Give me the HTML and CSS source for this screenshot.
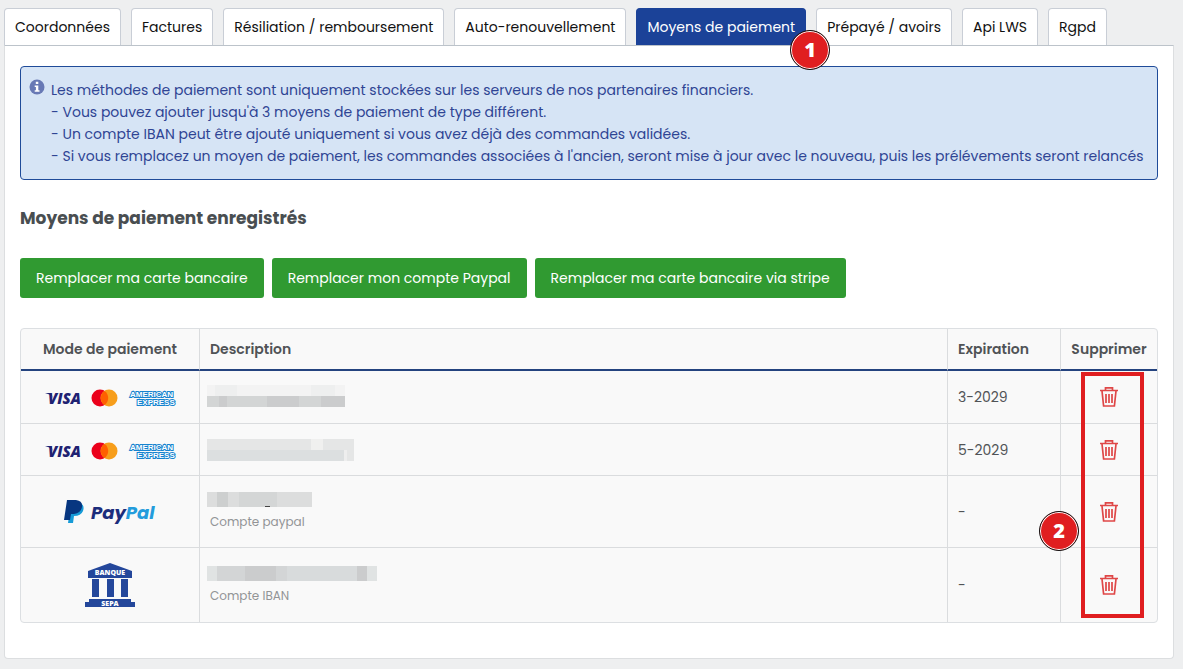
FILE: index.html
```html
<!DOCTYPE html>
<html lang="fr">
<head>
<meta charset="utf-8">
<title>Moyens de paiement</title>
<meta name="viewport" content="width=device-width, initial-scale=1">
<link rel="stylesheet" href="styles.css">
</head>
<body>
<svg class="sprite" aria-hidden="true">
  <symbol id="trash" viewBox="0 0 18 20">
    <path d="M0 3.500h18M5.500 3V.9h7V3M2 4l1.600 15h10.800L16 4M6 7v9M9 7v9M12 7v9" fill="none" stroke="#df4747" stroke-width="1.700"/>
  </symbol>
</svg>
<main class="page">
  <nav class="tabs" aria-label="Mon compte">
    <a class="tab" href="#">Coordonnées</a>
    <a class="tab" href="#">Factures</a>
    <a class="tab" href="#">Résiliation / remboursement</a>
    <a class="tab" href="#">Auto-renouvellement</a>
    <a class="tab tab-active" href="#" aria-current="page">Moyens de paiement<span class="marker marker-tab">1</span></a>
    <a class="tab" href="#">Prépayé / avoirs</a>
    <a class="tab" href="#">Api LWS</a>
    <a class="tab" href="#">Rgpd</a>
  </nav>
  <section class="panel">
    <div class="notice">
      <svg class="notice-icon" viewBox="0 0 16 16" aria-hidden="true"><circle cx="8" cy="8" r="7.500" fill="#6879b5"/><path d="M6.800 2.800h2.500v2.200H6.800zM5.700 6.500h3.600v4.700h1.200v1.600H5.700v-1.600h1.200V8H5.700z" fill="#fff"/></svg>
      <div>
        <p>Les méthodes de paiement sont uniquement stockées sur les serveurs de nos partenaires financiers.</p>
        <p>- Vous pouvez ajouter jusqu'à 3 moyens de paiement de type différent.</p>
        <p>- Un compte IBAN peut être ajouté uniquement si vous avez déjà des commandes validées.</p>
        <p>- Si vous remplacez un moyen de paiement, les commandes associées à l'ancien, seront mise à jour avec le nouveau, puis les prélévements seront relancés</p>
      </div>
    </div>
    <h1 class="title">Moyens de paiement enregistrés</h1>
    <div class="actions">
      <button class="btn" type="button">Remplacer ma carte bancaire</button>
      <button class="btn" type="button">Remplacer mon compte Paypal</button>
      <button class="btn" type="button">Remplacer ma carte bancaire via stripe</button>
    </div>
    <div class="table-wrap">
      <table class="methods">
        <colgroup><col class="col-mode"><col><col class="col-exp"><col class="col-del"></colgroup>
        <thead>
          <tr><th class="center" scope="col">Mode de paiement</th><th scope="col">Description</th><th scope="col">Expiration</th><th class="center" scope="col">Supprimer</th></tr>
        </thead>
        <tbody>
          <tr class="row-card">
            <td class="center"><svg class="cards" viewBox="-2 -4 134 24" role="img" aria-label="Visa, Mastercard, American Express">
              <text x="3" y="15" font-family="Open Sans, sans-serif" font-size="15" font-weight="800" font-style="italic" fill="#1f2272">VISA</text>
              <path d="M0 4h6l3 7-2-4Q4 5 0 4" fill="#1f2272"/>
              <circle cx="55" cy="9" r="8.500" fill="#eb001b"/><circle cx="64" cy="9" r="8.500" fill="#f79e1b"/>
              <path d="M59.500 2a8.500 8.500 0 0 1 0 14a8.500 8.500 0 0 1 0-14" fill="#ff5f00"/>
              <g font-family="Liberation Sans, sans-serif" font-size="8" font-weight="700" fill="#fff" stroke="#1683cf" stroke-width="2" paint-order="stroke"><text x="85" y="8">AMERICAN</text><text x="92" y="16">EXPRESS</text></g>
            </svg></td>
            <td><svg class="mask" width="150" height="26" aria-hidden="true"><path d="M0 0h138v11H0z" fill="#f3f3f3"/><path d="M8 0h22v11H8zM104 0h24v11h-24z" fill="#eeefef"/><path d="M0 11h138v11H0z" fill="#d3d5d5"/><path d="M12 11h8v11h-8zM60 11h32v11H60zM114 11h24v11h-24z" fill="#cbcccd"/></svg></td>
            <td>3-2029</td>
            <td class="center"><button class="delete" type="button" aria-label="Supprimer la carte 3-2029"><svg class="trash"><use href="#trash"/></svg></button></td>
          </tr>
          <tr class="row-card">
            <td class="center"><svg class="cards" viewBox="-2 -4 134 24" role="img" aria-label="Visa, Mastercard, American Express">
              <text x="3" y="15" font-family="Open Sans, sans-serif" font-size="15" font-weight="800" font-style="italic" fill="#1f2272">VISA</text>
              <path d="M0 4h6l3 7-2-4Q4 5 0 4" fill="#1f2272"/>
              <circle cx="55" cy="9" r="8.500" fill="#eb001b"/><circle cx="64" cy="9" r="8.500" fill="#f79e1b"/>
              <path d="M59.500 2a8.500 8.500 0 0 1 0 14a8.500 8.500 0 0 1 0-14" fill="#ff5f00"/>
              <g font-family="Liberation Sans, sans-serif" font-size="8" font-weight="700" fill="#fff" stroke="#1683cf" stroke-width="2" paint-order="stroke"><text x="85" y="8">AMERICAN</text><text x="92" y="16">EXPRESS</text></g>
            </svg></td>
            <td><svg class="mask" width="150" height="24" aria-hidden="true"><path d="M0 0h147v22H0z" fill="#e5e6e6"/><path d="M0 11h137v11H0z" fill="#dcdfe0"/><path d="M104 0h12v11h-12z" fill="#f0f0ef"/><path d="M137 11h3v11h-3z" fill="#eee"/></svg></td>
            <td>5-2029</td>
            <td class="center"><button class="delete" type="button" aria-label="Supprimer la carte 5-2029"><svg class="trash"><use href="#trash"/></svg></button></td>
          </tr>
          <tr class="row-paypal">
            <td class="center"><svg class="paypal" viewBox="0 0 92 26" role="img" aria-label="PayPal">
              <path d="M7 4h9q5 2 3 8-2 5-9 5l-1 7H4z" fill="#179bd7"/>
              <path d="M3 1h9q7 1 6 7-1 6-8 7H7l-1 6H0z" fill="#073680"/>
              <text y="20" font-family="Poppins, Lato, sans-serif" font-size="18" font-weight="700" font-style="italic"><tspan x="27" fill="#1c2d7c">Pay</tspan><tspan fill="#239cdc">Pal</tspan></text>
            </svg></td>
            <td><svg class="mask" width="106" height="15" aria-hidden="true"><path d="M0 0h105v15H0z" fill="#dcdddd"/><path d="M10 0h11v15H10z" fill="#cdcfcf"/><path d="M32 0h38v15H32z" fill="#d4d6d6"/><path d="M58 14h5v1h-5z" fill="#444"/></svg><span class="sub">Compte paypal</span></td>
            <td>-</td>
            <td class="center"><button class="delete" type="button" aria-label="Supprimer le compte Paypal"><svg class="trash"><use href="#trash"/></svg></button></td>
          </tr>
          <tr class="row-iban">
            <td class="center"><svg class="bank" viewBox="0 0 50 45" role="img" aria-label="Banque SEPA">
              <path d="M25 0 47 8v7H3V8zM7 16h7v18H7zM22 16h7v18h-7zM36 16h7v18h-7zM4 36h42v3h4v5H0v-5h4z" fill="#24479b"/>
              <g font-family="Open Sans, sans-serif" font-size="7" font-weight="800" fill="#fff" text-anchor="middle"><text x="25" y="12">BANQUE</text><text x="25" y="43">SEPA</text></g>
            </svg></td>
            <td><svg class="mask" width="170" height="15" aria-hidden="true"><path d="M0 0h170v15H0z" fill="#e0e3e3"/><path d="M10 0h150v15H10z" fill="#d3d5d6"/><path d="M38 0h31v15H38zM150 0h10v15h-10z" fill="#cbcccd"/><path d="M80 0h70v15H80z" fill="#d8dbdc"/></svg><span class="sub">Compte IBAN</span></td>
            <td>-</td>
            <td class="center"><button class="delete" type="button" aria-label="Supprimer le compte IBAN"><svg class="trash"><use href="#trash"/></svg></button></td>
          </tr>
        </tbody>
      </table>
      <div class="highlight"><span class="marker marker-delete">2</span></div>
    </div>
  </section>
</main>
</body>
</html>
```
FILE: styles.css
```css
* { box-sizing: border-box; }
body {
  margin: 0;
  background: #eeeff0;
  color: #505356;
  font-family: Poppins, Inter, "Open Sans", sans-serif;
  font-size: 14px;
  line-height: 22px;
}
p { margin: 0; }
.sprite { position: absolute; width: 0; height: 0; }
.page { padding: 8px 9px 10px 4px; }
.tabs { display: flex; gap: 10px; }
.tab {
  position: relative;
  padding: 7px 10px;
  border: 1px solid #c9ced6;
  border-bottom: 0;
  border-radius: 4px 4px 0 0;
  background: #fff;
  color: #111;
  text-decoration: none;
  text-align: center;
  white-space: nowrap;
}
.tab-active { background: #1b4298; border-color: #1b4298; color: #fff; }
.marker {
  position: absolute;
  z-index: 2;
  width: 40px;
  height: 40px;
  border: 1px solid #111;
  border-radius: 50%;
  background: #e01e20;
  box-shadow: inset 0 0 0 1px #fff;
  color: #fff;
  font: 800 20px/38px "Open Sans", sans-serif;
  text-align: center;
}
.marker-tab { right: -25px; bottom: -25px; }
.panel {
  padding: 20px 15px 35px;
  border: 1px solid #dcdee0;
  border-top-color: #bcc3ca;
  border-radius: 0 0 4px 4px;
  background: #fff;
}
.notice {
  display: flex;
  gap: 6px;
  padding: 12px 8px;
  border: 1px solid #1f4b99;
  border-radius: 4px;
  background: #d6e4f5;
  color: #2f4494;
}
.notice-icon { flex: none; width: 16px; height: 16px; }
.title { margin: 25px 0 27px; font-size: 17px; line-height: 26px; font-weight: 700; color: #494e51; }
.actions { display: flex; flex-wrap: wrap; gap: 8px; margin-bottom: 30px; }
.btn {
  height: 40px;
  padding: 0 16px;
  border: 0;
  border-radius: 3px;
  background: #309a31;
  color: #fff;
  font: inherit;
  cursor: pointer;
}
.table-wrap { position: relative; border: 1px solid #dcdfe2; border-radius: 4px; background: #f9f9f9; }
.methods { width: 100%; table-layout: fixed; border-collapse: separate; border-spacing: 0; }
.col-mode { width: 179px; }
.col-exp { width: 113px; }
.col-del { width: 96px; }
th, td { padding: 0 10px; border-right: 1px solid #dadcde; text-align: left; vertical-align: middle; }
th:last-child, td:last-child { border-right: 0; }
th { height: 42px; border-bottom: 2px solid #24437f; font-weight: 600; }
td { border-bottom: 1px solid #dadcde; }
tr:last-child td { border-bottom: 0; }
th.center, td.center { padding: 0; text-align: center; }
.row-card { height: 52px; }
.row-card:first-child { height: 53px; }
.row-paypal { height: 72px; }
.row-iban { height: 74px; }
svg { display: block; }
.cards { width: 134px; height: 24px; margin: 0 auto; }
.paypal { width: 92px; height: 26px; margin: 0 auto; }
.bank { width: 50px; height: 45px; margin: 0 auto; }
.mask { margin: 2px 0 0 -3px; }
.sub { display: block; margin-top: 4px; font-size: 12px; color: #929496; }
.delete { padding: 4px; border: 0; background: none; cursor: pointer; vertical-align: middle; }
.trash { width: 18px; height: 20px; }
.highlight {
  position: absolute;
  top: 43px;
  right: 13px;
  bottom: 4px;
  width: 63px;
  border: 4px solid #e01e20;
  pointer-events: none;
}
.marker-delete { left: -46px; bottom: 63px; }
```
